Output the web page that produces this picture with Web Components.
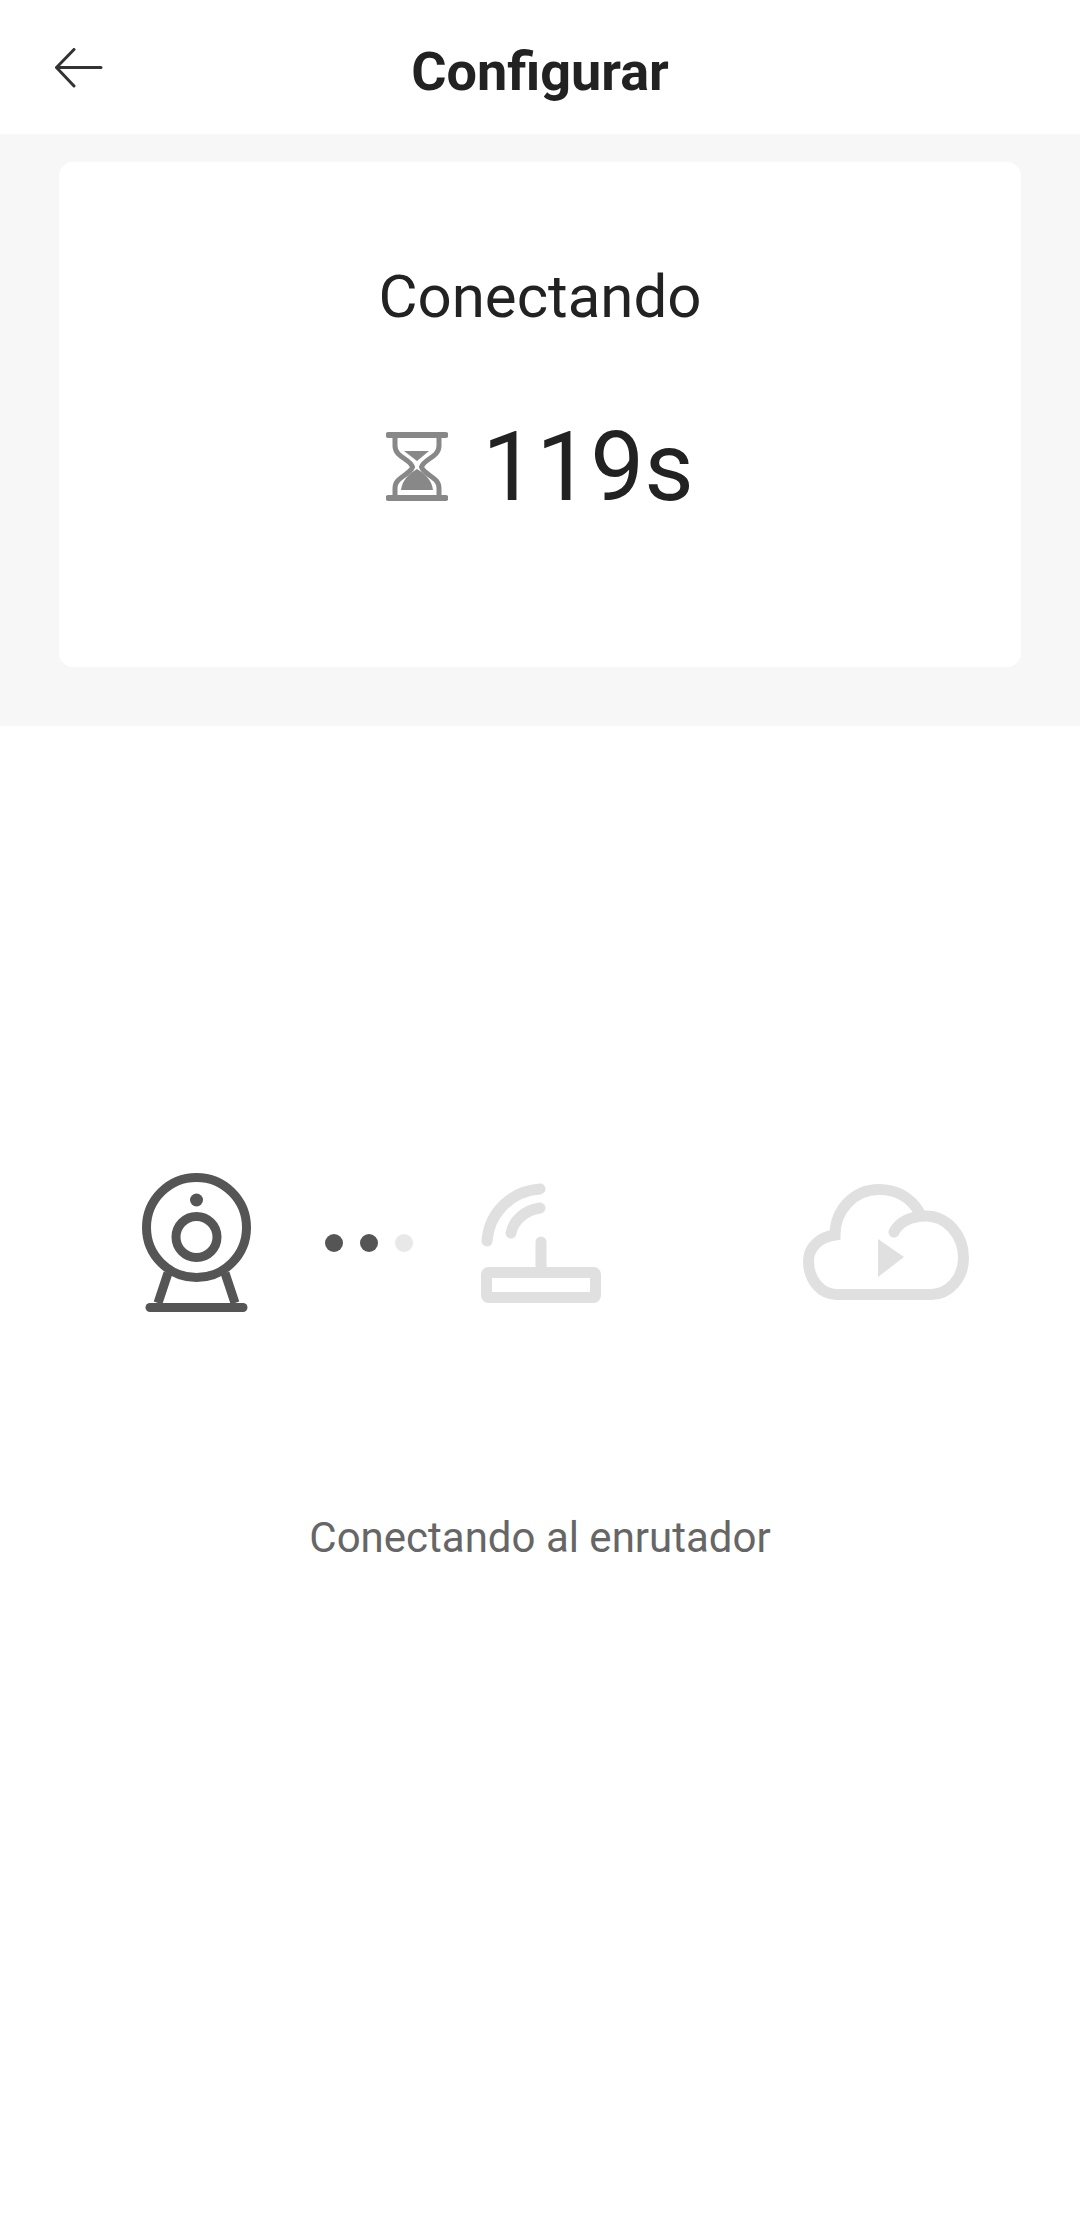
<!DOCTYPE html>
<html lang="es">
<head>
<meta charset="utf-8">
<title>Configurar</title>
<style>
  html, body { margin: 0; background: #fff; }
  body { font-family: Roboto, "Liberation Sans", sans-serif; color: #222; }
</style>
</head>
<body>
<app-header>Configurar</app-header>
<status-panel>
  <span slot="title">Conectando</span>
  <span slot="time">119s</span>
</status-panel>
<step-flow caption="Conectando al enrutador"></step-flow>

<script>
class AppHeader extends HTMLElement {
  constructor() {
    super();
    this.attachShadow({ mode: 'open' });
    this.shadowRoot.innerHTML = `
      <style>
        :host { display: flex; height: 134px; align-items: center; justify-content: center; position: relative; background: #fff; }
        h1 { margin: 9px 0 0; font-size: 54px; line-height: 64px; font-weight: 700; color: #222; letter-spacing: 0; }
        svg { position: absolute; left: 55px; top: 48px; }
      </style>
      <svg width="48" height="40" viewBox="0 0 48 40" fill="none" stroke="#333" stroke-width="3" stroke-linecap="round" stroke-linejoin="round">
        <path d="M46 19.5H1.5M19 1.5 1.5 19.5 19 38"/>
      </svg>
      <h1><slot></slot></h1>`;
  }
}

class StatusPanel extends HTMLElement {
  constructor() {
    super();
    this.attachShadow({ mode: 'open' });
    this.shadowRoot.innerHTML = `
      <style>
        :host { display: block; background: #f7f7f7; padding: 28px 59px 59px; }
        .card { background: #fff; border-radius: 14px; height: 505px; box-sizing: border-box; padding-top: 100px; display: flex; flex-direction: column; align-items: center; }
        .title { font-size: 60px; line-height: 70px; color: #222; }
        .time { display: flex; align-items: center; gap: 34px; margin-top: 79px; font-size: 96px; line-height: 112px; color: #222; }
      </style>
      <div class="card">
        <div class="title"><slot name="title"></slot></div>
        <div class="time">
          <svg width="62" height="70" viewBox="0 0 62 70" fill="none" stroke="#888" stroke-width="5">
            <path d="M2.500 3H59.500M2.500 66H59.500" stroke-width="6" stroke-linecap="round"/>
            <path d="M9 4V14C9 25 24 27 26.500 35C24 43 9 45 9 56V65M53 4V14C53 25 38 27 35.500 35C38 43 53 45 53 56V65"/>
            <path d="M18 19H43L31 29ZM15 58C16 48 24 41 31 37C38 41 46 48 47 58Z" fill="#888" stroke="none"/>
          </svg>
          <slot name="time"></slot>
        </div>
      </div>`;
  }
}

class CameraIcon extends HTMLElement {
  constructor() {
    super();
    this.attachShadow({ mode: 'open' });
    this.shadowRoot.innerHTML = `
      <style>:host { display: block; width: 110px; height: 139px; } svg { display: block; }</style>
      <svg width="110" height="139" viewBox="0 0 110 139" fill="none" stroke="#555" stroke-width="9">
        <circle cx="54.500" cy="54.500" r="50"/>
        <circle cx="54.500" cy="64" r="20.500"/>
        <circle cx="54.500" cy="27" r="6.500" fill="#555" stroke="none"/>
        <path d="M26 100 16 130M83 100 93 130"/>
        <path d="M8 134.500H101" stroke-linecap="round"/>
      </svg>`;
  }
}

class RouterIcon extends HTMLElement {
  constructor() {
    super();
    this.attachShadow({ mode: 'open' });
    this.shadowRoot.innerHTML = `
      <style>:host { display: block; width: 120px; height: 120px; } svg { display: block; }</style>
      <svg width="120" height="120" viewBox="0 0 120 120" fill="none" stroke="#e0e0e0" stroke-width="11" stroke-linecap="round">
        <rect x="5.500" y="89.500" width="109" height="25" rx="2"/>
        <path d="M60 59V89"/>
        <path d="M6 58C8 30 30 8 59 6"/>
        <path d="M30 50C32 38 44 27 59 25"/>
      </svg>`;
  }
}

class CloudIcon extends HTMLElement {
  constructor() {
    super();
    this.attachShadow({ mode: 'open' });
    this.shadowRoot.innerHTML = `
      <style>:host { display: block; width: 166px; height: 116px; } svg { display: block; }</style>
      <svg width="166" height="116" viewBox="22 24 166 116" fill="none" stroke="#e0e0e0" stroke-width="11" stroke-linecap="round">
        <path d="M138 52C130 38 116 29.500 98 29.500C73 29.500 54 50 54 75C38 77 27.500 88 27.500 101C27.500 120 40 134.500 56 134.500H150C168 134.500 182.500 118 182.500 98C182.500 74 165 56 145 56C130 56 118 62 113 72"/>
        <path d="M97 79 123 97 97 117Z" fill="#e0e0e0" stroke="none"/>
      </svg>`;
  }
}

class StepFlow extends HTMLElement {
  constructor() {
    super();
    this.attachShadow({ mode: 'open' });
    this.shadowRoot.innerHTML = `
      <style>
        :host { display: block; background: #fff; padding-top: 447px; }
        .row { display: flex; align-items: flex-start; padding-left: 142px; height: 139px; }
        .dots { display: flex; gap: 17px; margin: 61px 68px 0 73px; }
        .dots i { display: block; width: 18px; height: 18px; border-radius: 50%; background: #555; }
        .dots i:last-child { background: #e8e8e8; }
        router-icon { margin-top: 10px; }
        cloud-icon { margin: 11px 0 0 202px; }
        p { margin: 201px 0 0; text-align: center; font-size: 42px; line-height: 50px; color: #666; }
      </style>
      <div class="row">
        <camera-icon></camera-icon>
        <div class="dots"><i></i><i></i><i></i></div>
        <router-icon></router-icon>
        <cloud-icon></cloud-icon>
      </div>
      <p></p>`;
    this.shadowRoot.querySelector('p').textContent = this.getAttribute('caption');
  }
}

customElements.define('app-header', AppHeader);
customElements.define('status-panel', StatusPanel);
customElements.define('camera-icon', CameraIcon);
customElements.define('router-icon', RouterIcon);
customElements.define('cloud-icon', CloudIcon);
customElements.define('step-flow', StepFlow);
</script>
</body>
</html>
